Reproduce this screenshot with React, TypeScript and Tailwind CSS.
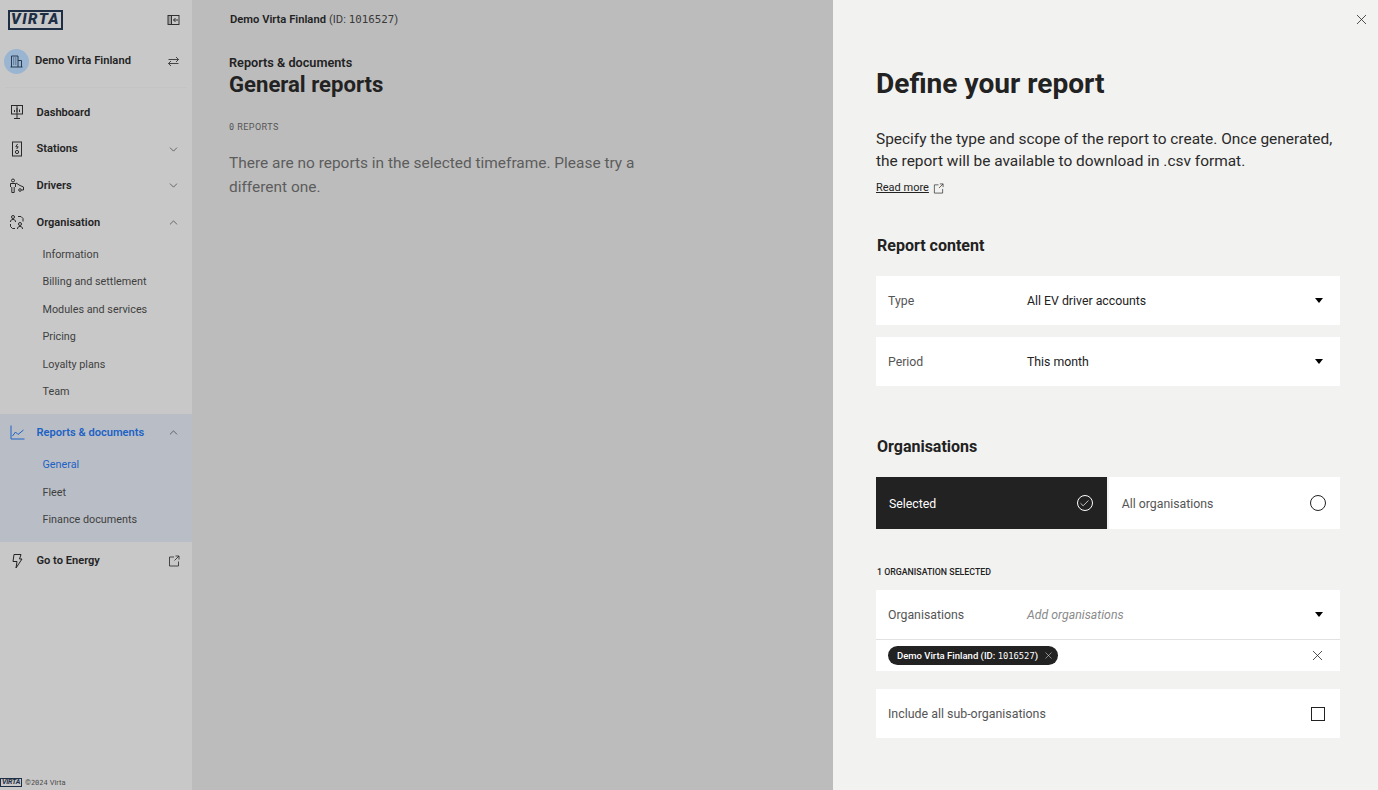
import { ChevronDown, ChevronUp, X, Check } from 'lucide-react';

const font = { fontFamily: 'Roboto, sans-serif' };
const mono = { fontFamily: '"DejaVu Sans Mono", monospace' };

function Logo({ small }: { small?: boolean }) {
  if (small) {
    return (
      <div className="flex h-[9px] w-[22px] items-center justify-center border border-[#1e2f45] text-[7px] leading-none font-bold italic tracking-tight text-[#1e2f45]">
        VIRTA
      </div>
    );
  }
  return (
    <div className="flex h-[20px] w-[55px] items-center justify-center border-2 border-[#1e2f45] text-[15px] leading-none font-black italic tracking-[1.5px] text-[#1e2f45]">
      VIRTA
    </div>
  );
}

function CollapseIcon() {
  return (
    <svg width="13" height="12" viewBox="0 0 13 12" fill="none" stroke="#232323" strokeWidth="0.9">
      <rect x="1" y="1.5" width="11" height="9" />
      <path d="M4.5 1.5v9M11 6H6.5M8.5 4 6.5 6l2 2" />
      <path d="M1 3h3.5M1 5h3.5M1 7h3.5M1 9h3.5" strokeWidth="0.5" />
    </svg>
  );
}

function SwitchIcon() {
  return (
    <svg width="11" height="11" viewBox="0 0 11 11" fill="none" stroke="#232323" strokeWidth="0.8">
      <path d="M0.5 3.5h10M8 1l2.5 2.5L8 6M10.5 7.5H.5M3 5 .5 7.5 3 10" />
    </svg>
  );
}

function BuildingIcon() {
  return (
    <svg width="13" height="13" viewBox="0 0 13 13" fill="none" stroke="#1e2f45" strokeWidth="0.9">
      <path d="M1.5 12V1h6.5v11M8 5.5h3.5V12M.5 12h12" />
      <path d="M3.2 3h1M5.3 3h1M3.2 5h1M5.3 5h1M3.2 7h1M5.3 7h1M3.2 9h1M5.3 9h1" />
    </svg>
  );
}

function ExtIcon({ size = 12, color = '#232323' }: { size?: number; color?: string }) {
  return (
    <svg width={size} height={size} viewBox="0 0 12 12" fill="none" stroke={color} strokeWidth="0.8">
      <path d="M6 2H1.5v9h9V6.5M6.5 5.5 11 1M7.5 1H11v3.5" />
    </svg>
  );
}

function DashIcon() {
  return (
    <svg width="16" height="16" viewBox="0 0 16 16" fill="none" stroke="#2a2a2a" strokeWidth="1">
      <rect x="2.5" y="1.5" width="11" height="8.5" />
      <path d="M8 1v13M5 14.5h6M5.5 8V6M8 8V4M10.5 8V5.5" />
    </svg>
  );
}

function StationIcon() {
  return (
    <svg width="16" height="16" viewBox="0 0 16 16" fill="none" stroke="#2a2a2a" strokeWidth="1">
      <rect x="3.5" y="1" width="9" height="14" />
      <path d="M8.5 3 6.8 5.8h2.4L7.6 8" />
      <circle cx="8" cy="11" r="1.6" />
    </svg>
  );
}

function DriverIcon() {
  return (
    <svg width="16" height="16" viewBox="0 0 16 16" fill="none" stroke="#2a2a2a" strokeWidth="1">
      <circle cx="4" cy="2.5" r="1.5" />
      <path d="M1.5 9V5.5h5V9M2.8 9v5.5h2.4V9M7 5l4 2.5 3.5 1.5v3h-2" />
      <circle cx="11" cy="12" r="1.3" />
    </svg>
  );
}

function OrgIcon() {
  return (
    <svg width="16" height="16" viewBox="0 0 16 16" fill="none" stroke="#2a2a2a" strokeWidth="1">
      <circle cx="4" cy="3" r="1.5" />
      <path d="M1.5 8c0-2 1-2.5 2.5-2.5S6.5 6 6.5 8" />
      <circle cx="11" cy="10" r="1.5" />
      <path d="M8.5 15c0-2 1-2.5 2.5-2.5s2.5.5 2.5 2.5M9 2.5h3l2 2v3M1.5 10v2.5l2 2H6" />
    </svg>
  );
}

function ChartIcon() {
  return (
    <svg width="15" height="15" viewBox="0 0 15 15" fill="none" stroke="#1d62c4" strokeWidth="1">
      <path d="M1 .5v13.5h13.5M2.5 11l3-4 2.5 2.5L13.5 5" />
    </svg>
  );
}

function BoltIcon() {
  return (
    <svg width="16" height="16" viewBox="0 0 16 16" fill="none" stroke="#232323" strokeWidth="1">
      <path d="M5 1.5h7l-1.5 4.5h2.5L7 15l1-6.5H4z" />
    </svg>
  );
}

function NavRow({ icon, label, chevron, active }: { icon: React.ReactNode; label: string; chevron?: 'up' | 'down' | 'ext'; active?: boolean }) {
  return (
    <div className={`flex h-[36.7px] items-center pr-[12px] pl-[9px] ${active ? 'text-[#1d62c4]' : 'text-[#232323]'}`}>
      <div className="flex w-[16px] justify-center">{icon}</div>
      <span className="mt-[1px] ml-[11.5px] flex-1 text-[11.1px] font-semibold">{label}</span>
      {chevron === 'down' && <ChevronDown size={13} strokeWidth={1.1} color="#232323" />}
      {chevron === 'up' && <ChevronUp size={13} strokeWidth={1.1} color="#232323" />}
      {chevron === 'ext' && <ExtIcon />}
    </div>
  );
}

function SubRow({ label, active }: { label: string; active?: boolean }) {
  return (
    <div className={`flex h-[27.5px] items-center pt-[1px] pl-[42.5px] text-[10.8px] ${active ? 'text-[#1d62c4]' : 'text-[#3f3f3f]'}`}>{label}</div>
  );
}

function Sidebar() {
  return (
    <aside className="flex h-[790px] w-[192px] shrink-0 flex-col bg-[#c8c8c8]">
      <div className="flex h-[39px] items-center justify-between pr-[12px] pl-[8px]">
        <Logo />
        <CollapseIcon />
      </div>
      <div className="mt-[9px] flex h-[26px] items-center pr-[13px] pl-[4px]">
        <div className="flex h-[25px] w-[25px] items-center justify-center rounded-full bg-[#9ab5d1]">
          <BuildingIcon />
        </div>
        <span className="ml-[6px] flex-1 text-[11.2px] font-semibold text-[#232323]">Demo Virta Finland</span>
        <SwitchIcon />
      </div>
      <div className="mx-[5px] mt-[13px] h-px bg-[#c3c3c3]" />
      <nav className="mt-[6px] flex flex-col">
        <NavRow icon={<DashIcon />} label="Dashboard" />
        <NavRow icon={<StationIcon />} label="Stations" chevron="down" />
        <NavRow icon={<DriverIcon />} label="Drivers" chevron="down" />
        <NavRow icon={<OrgIcon />} label="Organisation" chevron="up" />
        <div className="flex flex-col pb-[8.5px]">
          <SubRow label="Information" />
          <SubRow label="Billing and settlement" />
          <SubRow label="Modules and services" />
          <SubRow label="Pricing" />
          <SubRow label="Loyalty plans" />
          <SubRow label="Team" />
        </div>
        <div className="flex flex-col bg-[#b9bec6] pb-[9px]">
          <NavRow icon={<ChartIcon />} label="Reports & documents" chevron="up" active />
          <SubRow label="General" active />
          <SubRow label="Fleet" />
          <SubRow label="Finance documents" />
        </div>
        <NavRow icon={<BoltIcon />} label="Go to Energy" chevron="ext" />
      </nav>
      <div className="mt-auto flex h-[15px] items-center gap-[3px] text-[7.5px] text-[#4d4d4d]">
        <Logo small />
        <span>©<span style={mono} className="text-[7px]">2024</span> Virta</span>
      </div>
    </aside>
  );
}

function Main() {
  return (
    <main className="h-[790px] w-[641px] shrink-0 bg-[#bcbcbc] pl-[37px] text-[#222222]">
      <div className="flex h-[39px] items-center pt-[1px] pl-[1px] text-[11.2px]">
        <span className="font-semibold">Demo Virta Finland</span>
        <span className="ml-[3px] text-[#3a3a3a]">
          (ID: <span style={mono} className="text-[10.8px]">1016527</span>)
        </span>
      </div>
      <div className="mt-[16px] text-[12.7px] leading-[16px] font-semibold">Reports &amp; documents</div>
      <h1 className="text-[22.1px] leading-[26px] font-bold">General reports</h1>
      <div className="mt-[24px] text-[9px] leading-[12px] tracking-wider text-[#555555]">
        <span style={mono} className="text-[8.5px]">0</span> REPORTS
      </div>
      <p className="mt-[18px] w-[430px] text-[15.45px] leading-[24px] text-[#5c5c5c]">
        There are no reports in the selected timeframe. Please try a different one.
      </p>
    </main>
  );
}

function SelectRow({ label, value, placeholder }: { label: string; value: string; placeholder?: boolean }) {
  return (
    <div className="flex h-[49px] items-center bg-white pr-[17px] pl-[12px] text-[12.3px]">
      <span className="w-[139px] pt-[2px] text-[#555555]">{label}</span>
      <span className={`flex-1 pt-[2px] ${placeholder ? 'text-[#8a8a8a] italic' : 'text-[#222222]'}`}>{value}</span>
      <div className="h-0 w-0 border-x-[4.5px] border-t-[5px] border-x-transparent border-t-black" />
    </div>
  );
}

function Panel() {
  return (
    <section className="relative h-[790px] w-[545px] shrink-0 overflow-hidden bg-[#f2f2f0] pr-[38px] pl-[43px] text-[#222222]">
      <X size={17} strokeWidth={1.1} color="#222222" className="absolute top-[10.5px] right-[8.5px]" />
      <h2 className="mt-[66px] text-[28.1px] leading-[36px] font-bold">Define your report</h2>
      <p className="mt-[27px] text-[15.45px] leading-[21.5px] text-[#2a2a2a]">
        Specify the type and scope of the report to create. Once generated, the report will be available to download in .csv format.
      </p>
      <div className="mt-[9px] flex h-[14px] items-center gap-[4px] text-[11px]">
        <span className="underline">Read more</span>
        <ExtIcon size={11} color="#333333" />
      </div>
      <h3 className="mt-[41px] ml-[1px] text-[16px] leading-[20px] font-bold">Report content</h3>
      <div className="mt-[20px] flex flex-col gap-[12px]">
        <SelectRow label="Type" value="All EV driver accounts" />
        <SelectRow label="Period" value="This month" />
      </div>
      <h3 className="mt-[51px] ml-[1px] text-[16px] leading-[20px] font-bold">Organisations</h3>
      <div className="mt-[20px] flex h-[52px] gap-[2px] text-[12.3px]">
        <div className="flex flex-1 items-center justify-between bg-[#222222] pr-[14px] pl-[13px] text-white">
          <span className="pt-[2px]">Selected</span>
          <div className="flex h-[16px] w-[16px] items-center justify-center rounded-full border border-white">
            <Check size={11} strokeWidth={1.6} />
          </div>
        </div>
        <div className="flex flex-1 items-center justify-between bg-white pr-[14.5px] pl-[13px] text-[#555555]">
          <span className="pt-[2px]">All organisations</span>
          <div className="h-[16px] w-[16px] rounded-full border-[1.5px] border-[#222222]" />
        </div>
      </div>
      <div className="mt-[37px] ml-[1px] text-[8.8px] leading-[12px] font-medium">1 ORGANISATION SELECTED</div>
      <div className="mt-[12px]">
        <SelectRow label="Organisations" value="Add organisations" placeholder />
        <div className="flex h-[32px] items-center justify-between border-t border-[#e2e2e2] bg-white pr-[14px] pl-[12px]">
          <div className="flex h-[19px] w-[170px] items-center justify-between rounded-full bg-[#222222] pr-[4px] pl-[9px] text-[9.5px] font-medium text-white">
            <span className="pt-[1px]">
              Demo Virta Finland (ID: <span style={mono} className="text-[8.8px]">1016527</span>)
            </span>
            <X size={11} strokeWidth={1} />
          </div>
          <X size={17} strokeWidth={1.1} color="#222222" />
        </div>
      </div>
      <div className="mt-[18px] flex h-[49px] items-center justify-between bg-white pr-[15px] pl-[12px] text-[12.4px] text-[#555555]">
        <span className="pt-[2px]">Include all sub-organisations</span>
        <div className="h-[14px] w-[14px] border-[1.5px] border-[#222222]" />
      </div>
    </section>
  );
}

export default function App() {
  return (
    <div className="flex h-[790px] w-[1378px] overflow-hidden" style={font}>
      <Sidebar />
      <Main />
      <Panel />
    </div>
  );
}
